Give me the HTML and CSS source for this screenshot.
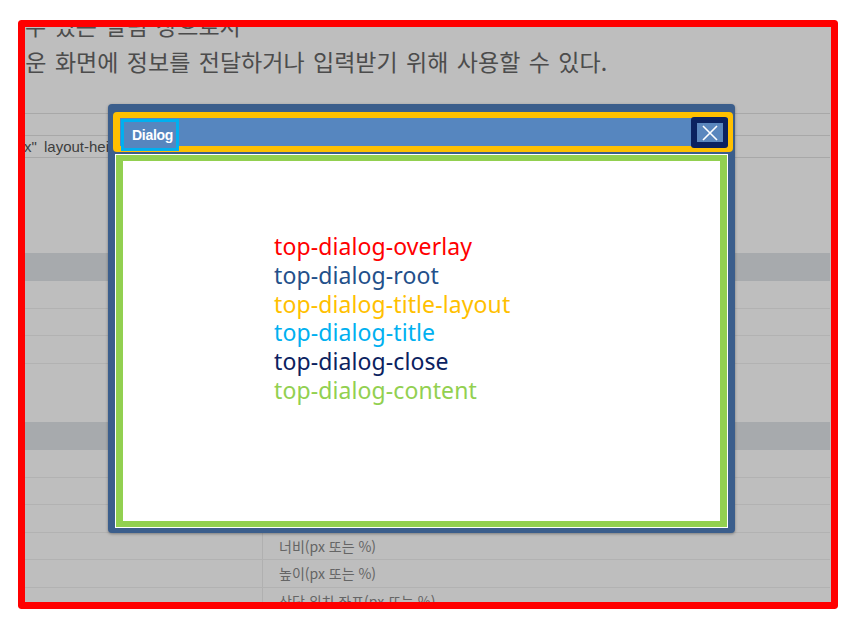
FILE: index.html
```html
<!DOCTYPE html>
<html lang="ko">
<head>
<meta charset="utf-8">
<title>top-dialog</title>
<link rel="stylesheet" href="styles.css">
</head>
<body>
<div class="stage">
  <div class="doc">
    <p class="intro">
      <span class="line line-1">수 있는 알림 창으로서</span>
      <span class="line line-2">새로운 화면에 정보를 전달하거나 입력받기 위해 사용할 수 있다.</span>
    </p>
    <div class="code-box">
      <div class="code-row"></div>
      <div class="code-row"><code class="code">x" layout-height="300px"&gt;&lt;/top-dialog&gt;</code></div>
    </div>
    <div class="table table-1">
      <div class="row head"><span class="cell">속성</span><span class="cell">설명</span></div>
      <div class="row"><span class="cell"></span><span class="cell">제목</span></div>
      <div class="row"><span class="cell"></span><span class="cell">닫기 버튼 표시 여부</span></div>
      <div class="row"><span class="cell"></span><span class="cell">모달 여부</span></div>
    </div>
    <div class="table table-2">
      <div class="row head"><span class="cell">속성</span><span class="cell">설명</span></div>
      <div class="row"><span class="cell"></span><span class="cell">제목</span></div>
      <div class="row"><span class="cell"></span><span class="cell">내용</span></div>
      <div class="row"><span class="cell"></span><span class="cell">이동 가능 여부</span></div>
      <div class="row"><span class="cell"></span><span class="cell">너비(px 또는 %)</span></div>
      <div class="row"><span class="cell"></span><span class="cell">높이(px 또는 %)</span></div>
      <div class="row"><span class="cell"></span><span class="cell">상단 위치 좌표(px 또는 %)</span></div>
    </div>
  </div>

  <div class="overlay">
    <div class="dialog-root">
      <div class="title-layout">
        <div class="title-bar">
          <span class="title">Dialog</span>
          <button class="close" type="button" aria-label="close">
            <span class="close-face">
              <svg width="16" height="16" viewBox="0 0 16 16"><path d="M1 1 L15 15 M15 1 L1 15" stroke="#fff" stroke-width="1.6" fill="none"/></svg>
            </span>
          </button>
        </div>
      </div>
      <div class="content">
        <ul class="legend">
          <li class="c-overlay">top-dialog-overlay</li>
          <li class="c-root">top-dialog-root</li>
          <li class="c-title-layout">top-dialog-title-layout</li>
          <li class="c-title">top-dialog-title</li>
          <li class="c-close">top-dialog-close</li>
          <li class="c-content">top-dialog-content</li>
        </ul>
      </div>
    </div>
  </div>
</div>
</body>
</html>
```
FILE: styles.css
```css
* { box-sizing: border-box; }
html, body { margin: 0; padding: 0; background: #fff; }
body { width: 867px; height: 631px; overflow: hidden; }

.stage {
  position: relative;
  width: 820px;
  height: 589px;
  margin: 20px 0 0 18px;
  overflow: hidden;
  border-radius: 3px;
  background: #fff;
}

/* ---------- page behind the overlay ---------- */
.doc {
  font-family: "Noto Sans CJK KR", "Noto Sans", sans-serif;
  color: #666;
}
.intro {
  margin: -13px 0 0 0;
  font-size: 23px;
  line-height: 36px;
  word-spacing: 2px;
  white-space: nowrap;
}
.line { display: block; }
.line-1 { margin-left: 7px; }
.line-2 { margin-left: -35px; }

.code-box {
  margin: 34px 0 0 7px;
  width: 805px;
  border-top: 1px solid #e2e2e2;
}
.code-row {
  height: 22px;
  border-bottom: 1px solid #e2e2e2;
  white-space: nowrap;
  overflow: hidden;
}
.code {
  display: block;
  margin-left: -1px;
  font-family: "Liberation Sans", sans-serif;
  font-size: 15px;
  line-height: 21px;
  word-spacing: 3px;
  color: #555;
}

.table {
  margin-left: 7px;
  width: 805px;
  font-size: 14px;
  color: #888;
}
.table-1 { margin-top: 95px; }
.table-2 { margin-top: 58.5px; }
.row {
  display: grid;
  grid-template-columns: 238px 1fr;
  height: 27.5px;
  border-bottom: 1px solid #efefef;
}
.row.head {
  height: 28px;
  background: #e1e5e9;
  border-bottom: 0;
}
.cell {
  display: flex;
  align-items: center;
  padding-left: 16px;
  white-space: nowrap;
}
.cell:first-child { border-right: 1px solid #ededed; }
.row.head .cell { color: transparent; border-right: 0; }

/* ---------- overlay & dialog ---------- */
.overlay {
  position: absolute;
  inset: 0;
  border: 7px solid #ff0000;
  border-radius: 3px;
  background: rgba(0, 0, 0, 0.255);
}
.dialog-root {
  position: absolute;
  left: 83px;
  top: 77px;
  width: 627px;
  height: 429px;
  padding: 8px 8px 6px 8px;
  background: #3b5e8c;
  border-radius: 4px;
  box-shadow: 0 1px 3px rgba(0, 0, 0, 0.35);
}
.title-layout {
  height: 40px;
  margin: 0 -6px 0 -3px;
  padding: 6px 5px 6px 7px;
  background: #ffc000;
  border-radius: 4px;
}
.title-bar {
  display: flex;
  align-items: flex-start;
  justify-content: space-between;
  height: 28px;
  background: #5686bf;
}
.title {
  margin: 1px 0 0 1px;
  height: 32px;
  padding: 0 3px 0 8px;
  border: 3px solid #00b0f0;
  background: #5686bf;
  color: #fff;
  font-family: "Liberation Sans", Arial, sans-serif;
  font-weight: bold;
  font-size: 14px;
  letter-spacing: -0.3px;
  line-height: 26px;
}
.close {
  margin: -1px 0 0 0;
  width: 37px;
  height: 31px;
  padding: 6px 5px 6px 6px;
  border: 0;
  border-radius: 3px;
  background: #0b2260;
  cursor: pointer;
}
.close-face {
  display: flex;
  align-items: center;
  justify-content: center;
  width: 26px;
  height: 19px;
  background: #5a87be;
}
.content {
  height: 372px;
  margin-top: 3px;
  border-style: solid;
  border-color: #92d050;
  border-width: 6px 7px;
  background: #fff;
  box-shadow: 0 0 0 1px #fff;
  padding: 71px 0 0 151px;
}
.legend {
  list-style: none;
  margin: 0;
  padding: 0;
  font-family: "Noto Sans", sans-serif;
  font-size: 23px;
  letter-spacing: 0.1px;
  line-height: 28.8px;
}
.c-overlay { color: #ff0000; }
.c-root { color: #23508a; }
.c-title-layout { color: #ffc000; }
.c-title { color: #00b0f0; }
.c-close { color: #0b2260; }
.c-content { color: #92d050; }
```
